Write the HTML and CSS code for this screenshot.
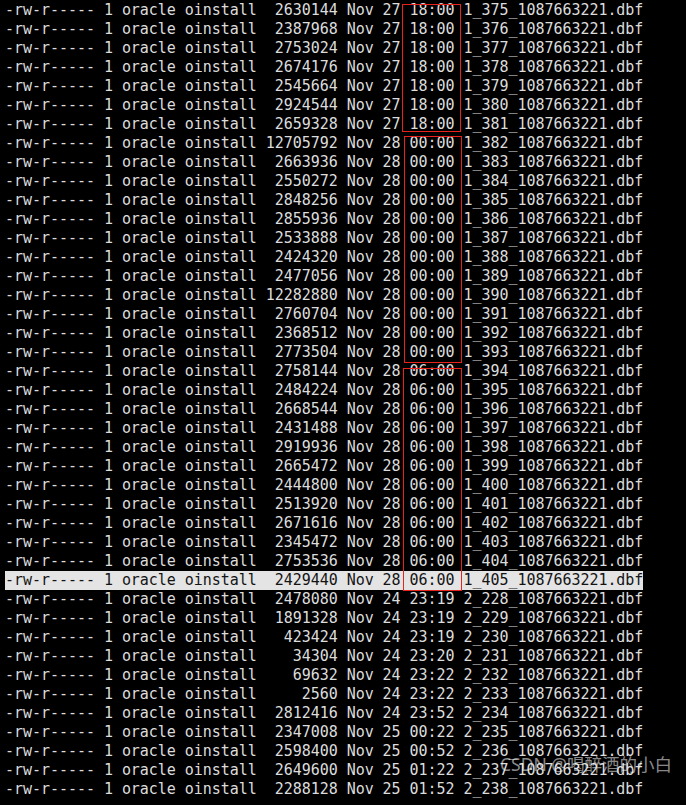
FILE: index.html
```html
<!DOCTYPE html>
<html>
<head>
    <title>archivelog listing</title>
    <link rel="stylesheet" href="styles.css">
</head>
<body>
    <div class="terminal">
<pre class="listing">-rw-r----- 1 oracle oinstall  2630144 Nov 27 18:00 1_375_1087663221.dbf
-rw-r----- 1 oracle oinstall  2387968 Nov 27 18:00 1_376_1087663221.dbf
-rw-r----- 1 oracle oinstall  2753024 Nov 27 18:00 1_377_1087663221.dbf
-rw-r----- 1 oracle oinstall  2674176 Nov 27 18:00 1_378_1087663221.dbf
-rw-r----- 1 oracle oinstall  2545664 Nov 27 18:00 1_379_1087663221.dbf
-rw-r----- 1 oracle oinstall  2924544 Nov 27 18:00 1_380_1087663221.dbf
-rw-r----- 1 oracle oinstall  2659328 Nov 27 18:00 1_381_1087663221.dbf
-rw-r----- 1 oracle oinstall 12705792 Nov 28 00:00 1_382_1087663221.dbf
-rw-r----- 1 oracle oinstall  2663936 Nov 28 00:00 1_383_1087663221.dbf
-rw-r----- 1 oracle oinstall  2550272 Nov 28 00:00 1_384_1087663221.dbf
-rw-r----- 1 oracle oinstall  2848256 Nov 28 00:00 1_385_1087663221.dbf
-rw-r----- 1 oracle oinstall  2855936 Nov 28 00:00 1_386_1087663221.dbf
-rw-r----- 1 oracle oinstall  2533888 Nov 28 00:00 1_387_1087663221.dbf
-rw-r----- 1 oracle oinstall  2424320 Nov 28 00:00 1_388_1087663221.dbf
-rw-r----- 1 oracle oinstall  2477056 Nov 28 00:00 1_389_1087663221.dbf
-rw-r----- 1 oracle oinstall 12282880 Nov 28 00:00 1_390_1087663221.dbf
-rw-r----- 1 oracle oinstall  2760704 Nov 28 00:00 1_391_1087663221.dbf
-rw-r----- 1 oracle oinstall  2368512 Nov 28 00:00 1_392_1087663221.dbf
-rw-r----- 1 oracle oinstall  2773504 Nov 28 00:00 1_393_1087663221.dbf
-rw-r----- 1 oracle oinstall  2758144 Nov 28 06:00 1_394_1087663221.dbf
-rw-r----- 1 oracle oinstall  2484224 Nov 28 06:00 1_395_1087663221.dbf
-rw-r----- 1 oracle oinstall  2668544 Nov 28 06:00 1_396_1087663221.dbf
-rw-r----- 1 oracle oinstall  2431488 Nov 28 06:00 1_397_1087663221.dbf
-rw-r----- 1 oracle oinstall  2919936 Nov 28 06:00 1_398_1087663221.dbf
-rw-r----- 1 oracle oinstall  2665472 Nov 28 06:00 1_399_1087663221.dbf
-rw-r----- 1 oracle oinstall  2444800 Nov 28 06:00 1_400_1087663221.dbf
-rw-r----- 1 oracle oinstall  2513920 Nov 28 06:00 1_401_1087663221.dbf
-rw-r----- 1 oracle oinstall  2671616 Nov 28 06:00 1_402_1087663221.dbf
-rw-r----- 1 oracle oinstall  2345472 Nov 28 06:00 1_403_1087663221.dbf
-rw-r----- 1 oracle oinstall  2753536 Nov 28 06:00 1_404_1087663221.dbf
<span class="selected">-rw-r----- 1 oracle oinstall  2429440 Nov 28 06:00 1_405_1087663221.dbf</span>
-rw-r----- 1 oracle oinstall  2478080 Nov 24 23:19 2_228_1087663221.dbf
-rw-r----- 1 oracle oinstall  1891328 Nov 24 23:19 2_229_1087663221.dbf
-rw-r----- 1 oracle oinstall   423424 Nov 24 23:19 2_230_1087663221.dbf
-rw-r----- 1 oracle oinstall    34304 Nov 24 23:20 2_231_1087663221.dbf
-rw-r----- 1 oracle oinstall    69632 Nov 24 23:22 2_232_1087663221.dbf
-rw-r----- 1 oracle oinstall     2560 Nov 24 23:22 2_233_1087663221.dbf
-rw-r----- 1 oracle oinstall  2812416 Nov 24 23:52 2_234_1087663221.dbf
-rw-r----- 1 oracle oinstall  2347008 Nov 25 00:22 2_235_1087663221.dbf
-rw-r----- 1 oracle oinstall  2598400 Nov 25 00:52 2_236_1087663221.dbf
-rw-r----- 1 oracle oinstall  2649600 Nov 25 01:22 2_237_1087663221.dbf
-rw-r----- 1 oracle oinstall  2288128 Nov 25 01:52 2_238_1087663221.dbf</pre>

        <!-- red markers around the log switch times -->
        <div class="mark mark-18"></div>
        <div class="mark mark-00"></div>
        <div class="mark mark-06"></div>

        <div class="watermark">CSDN @喝醉酒的小白</div>
    </div>
</body>
</html>
```

FILE: styles.css
```css
html, body {
    margin: 0;
    background-color: #000;
}
.terminal {
    position: relative;
    height: 805px;
    overflow: hidden;
    background-color: #000;
}
.listing {
    margin: 0;
    padding: 1px 0 0 5px;
    font-family: "DejaVu Sans Mono", "Liberation Mono", monospace;
    font-size: 15px;
    line-height: 19px;
    letter-spacing: -0.04px;
    color: #dcdcdc;
    white-space: pre;
}
.selected {
    display: inline-block;
    height: 19px;
    background-color: #e4e4e4;
    color: #141414;
}
.mark {
    position: absolute;
    border: 1.5px solid #e8221c;
    box-sizing: border-box;
}
.mark-18 {
    left: 402px;
    top: 4px;
    width: 59px;
    height: 128px;
}
.mark-00 {
    left: 404px;
    top: 136px;
    width: 58px;
    height: 227px;
}
.mark-06 {
    left: 403px;
    top: 368px;
    width: 59px;
    height: 223px;
}
.watermark {
    position: absolute;
    left: 500px;
    top: 751px;
    font-family: "Noto Sans", "Noto Sans CJK SC", sans-serif;
    font-size: 17.5px;
    color: rgba(255, 255, 255, 0.55);
}
```
